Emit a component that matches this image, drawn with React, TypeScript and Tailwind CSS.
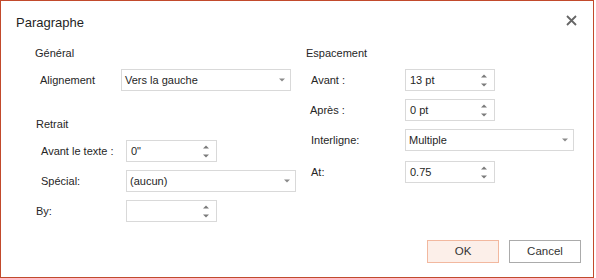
import type { ReactNode } from 'react';

const font = { fontFamily: '"Liberation Sans", Arial, sans-serif' };

function Caret() {
  return (
    <svg width="6" height="4" viewBox="0 0 6 4" className="shrink-0">
      <path d="M0 0.5 L6 0.5 L3 3.5 Z" fill="#8a8a8a" />
    </svg>
  );
}

function Spinner() {
  return (
    <div className="flex flex-col items-center gap-[5px] shrink-0">
      <svg width="6" height="4" viewBox="0 0 6 4">
        <path d="M0 3.5 L6 3.5 L3 0.5 Z" fill="#7a7a7a" />
      </svg>
      <svg width="6" height="4" viewBox="0 0 6 4">
        <path d="M0 0.5 L6 0.5 L3 3.5 Z" fill="#7a7a7a" />
      </svg>
    </div>
  );
}

function Select({ value, width }: { value: string; width: string }) {
  return (
    <div
      className={`${width} h-[22px] border border-[#d9d9d9] bg-white flex items-center justify-between pl-[3px] pr-[5px] text-[11px] text-[#1f1f1f]`}
    >
      <span>{value}</span>
      <Caret />
    </div>
  );
}

function Spin({ value, width = 'w-[91px]' }: { value: string; width?: string }) {
  return (
    <div
      className={`${width} h-[22px] border border-[#d9d9d9] bg-white flex items-center justify-between pl-[4px] pr-[7px] text-[11px] text-[#1f1f1f]`}
    >
      <span>{value}</span>
      <Spinner />
    </div>
  );
}

function Row({ label, labelClass, children, className = '' }: { label: string; labelClass: string; children: ReactNode; className?: string }) {
  return (
    <div className={`flex items-center h-[22px] ${className}`}>
      <span className={`${labelClass} text-[11px] text-[#262626] shrink-0`}>{label}</span>
      {children}
    </div>
  );
}

export default function App() {
  return (
    <div className="w-[596px] h-[278px] bg-white" style={font}>
      <div className="w-[594px] h-[278px] border border-[#c24a2c] flex flex-col">
        {/* Title */}
        <div className="h-[44px] flex items-center justify-between pl-[15px] pr-[16px]">
          <span className="text-[13px] text-[#1f1f1f]">Paragraphe</span>
          <svg width="11" height="11" viewBox="0 0 11 11" className="-mt-[6px]">
            <path d="M1 1 L10 10 M10 1 L1 10" stroke="#666" strokeWidth="1.8" />
          </svg>
        </div>

        <div className="flex">
          {/* Left column */}
          <div className="w-[305px] pl-[34px] flex flex-col">
            <div className="h-[16px] flex items-center text-[11px] text-[#262626]">Général</div>
            <Row label="Alignement" labelClass="w-[86px] pl-[5px]" className="mt-[8px]">
              <Select value="Vers la gauche" width="w-[170px]" />
            </Row>
            <div className="h-[16px] mt-[25px] flex items-center pl-[1px] text-[11px] text-[#262626]">Retrait</div>
            <Row label="Avant le texte :" labelClass="w-[91px] pl-[6px]" className="mt-[8px]">
              <Spin value={'0"'} />
            </Row>
            <Row label="Spécial:" labelClass="w-[91px] pl-[6px]" className="mt-[8px]">
              <Select value="(aucun)" width="w-[170px]" />
            </Row>
            <Row label="By:" labelClass="w-[91px] pl-[1px]" className="mt-[8px]">
              <Spin value="" />
            </Row>
          </div>

          {/* Right column */}
          <div className="flex-1 flex flex-col">
            <div className="h-[16px] flex items-center text-[11px] text-[#262626]">Espacement</div>
            <Row label="Avant :" labelClass="w-[99px] pl-[5px]" className="mt-[8px]">
              <Spin value="13 pt" width="w-[90px]" />
            </Row>
            <Row label="Après :" labelClass="w-[99px] pl-[4px]" className="mt-[8px]">
              <Spin value="0 pt" width="w-[90px]" />
            </Row>
            <Row label="Interligne:" labelClass="w-[99px] pl-[5px]" className="mt-[8px]">
              <Select value="Multiple" width="w-[169px]" />
            </Row>
            <Row label="At:" labelClass="w-[99px] pl-[5px]" className="mt-[10px]">
              <Spin value="0.75" width="w-[90px]" />
            </Row>
          </div>
        </div>

        {/* Footer */}
        <div className="mt-auto flex justify-end gap-[10px] pr-[12px] pb-[14px]">
          <button className="w-[72px] h-[23px] border border-[#f2b89f] bg-[#fcefe9] text-[11.5px] text-[#333]">
            OK
          </button>
          <button className="w-[72px] h-[23px] border border-[#ababab] bg-white text-[11.5px] text-[#333]">
            Cancel
          </button>
        </div>
      </div>
    </div>
  );
}
